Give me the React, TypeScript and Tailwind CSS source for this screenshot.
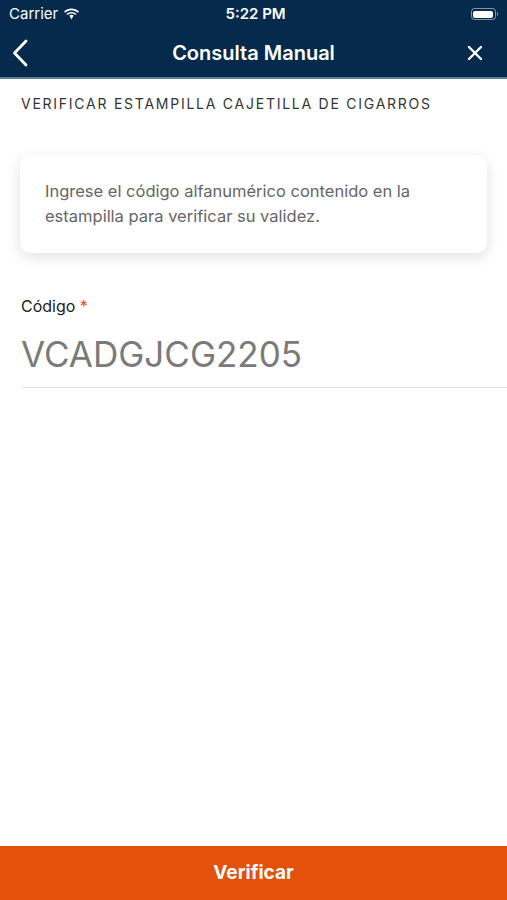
import React from 'react'
import { X } from 'lucide-react'

const font = { fontFamily: '"Inter", "Liberation Sans", Arial, sans-serif' }

function Wifi() {
  return (
    <svg width="17" height="12" viewBox="0 0 17 12" fill="white">
      <path d="M8.5 2.2c2.4 0 4.6.9 6.3 2.5l1.2-1.2C14 1.6 11.4.5 8.5.5S3 1.6 1 3.5l1.2 1.2C3.9 3.1 6.1 2.2 8.5 2.2z" />
      <path d="M8.5 5.6c1.5 0 2.8.5 3.9 1.5l1.2-1.2C12.2 4.6 10.4 3.9 8.5 3.9S4.8 4.6 3.4 5.9l1.2 1.2c1.1-1 2.4-1.5 3.9-1.5z" />
      <path d="M6.4 7.6 8.5 11.5 10.6 7.6C10 7.1 9.3 6.8 8.5 6.8S7 7.1 6.4 7.6z" />
    </svg>
  )
}

function Battery() {
  return (
    <div className="flex items-center">
      <div className="w-[25px] h-[12px] rounded-[3.5px] border border-white/50 p-[1.5px]">
        <div className="w-full h-full rounded-[2px] bg-white" />
      </div>
      <div className="w-[1.5px] h-[4px] rounded-r bg-white/50 ml-[1px]" />
    </div>
  )
}

function Back() {
  return (
    <svg width="16" height="28" viewBox="0 0 16 28" fill="none" stroke="white" strokeWidth="2.8" strokeLinecap="round" strokeLinejoin="round">
      <path d="M14 2 2.5 14 14 26" />
    </svg>
  )
}

export default function App() {
  return (
    <div className="w-[507px] h-[900px] bg-white flex flex-col" style={font}>
      <header className="bg-[#052a4b] border-b-2 border-[#9bb6c6]/60">
        <div className="h-[28px] flex items-center justify-between px-[9px] text-white">
          <div className="flex items-center gap-[5px] text-[15px]">
            <span>Carrier</span>
            <Wifi />
          </div>
          <div className="text-[15px] font-semibold">5:22 PM</div>
          <div className="w-[67px] flex justify-end">
            <Battery />
          </div>
        </div>
        <div className="h-[49px] grid grid-cols-[70px_1fr_70px] items-center text-white">
          <div className="pl-[12px]">
            <Back />
          </div>
          <h1 className="text-[20px] font-semibold text-center">Consulta Manual</h1>
          <div className="flex justify-end pr-[20px]">
            <X size={24} strokeWidth={2.4} />
          </div>
        </div>
      </header>

      <main className="flex-1 flex flex-col">
        <div className="px-[21px] pt-[14px] text-[14px] tracking-[0.125em] text-[#333]">
          VERIFICAR ESTAMPILLA CAJETILLA DE CIGARROS
        </div>

        <div className="mx-[20px] mt-[41px] rounded-[10px] bg-white shadow-[0_4px_14px_rgba(0,0,0,0.12)] px-[25px] py-[24px] text-[16.5px] leading-[25px] text-[#666]">
          Ingrese el código alfanumérico contenido en la
          <br />
          estampilla para verificar su validez.
        </div>

        <div className="pl-[21px] mt-[41px]">
          <div className="text-[16px] text-[#222]">
            Código <span className="text-[#e4510a]">*</span>
          </div>
          <div className="mt-[10px] pb-[6px] border-b border-[#e5e5e5] text-[35px] text-[#7a7a7a]">
            VCADGJCG2205
          </div>
        </div>
      </main>

      <button className="h-[54px] bg-[#e4510a] text-white text-[19px] font-bold">
        Verificar
      </button>
    </div>
  )
}
